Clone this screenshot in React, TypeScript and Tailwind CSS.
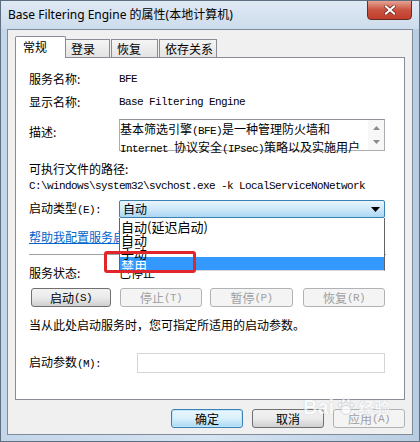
import React from "react";

const cjk = { fontFamily: '"Noto Sans CJK SC", "Noto Sans", sans-serif' };
const mono = { fontFamily: '"Liberation Mono", "Noto Sans CJK SC", monospace' };

// ASCII parts in the dialog are drawn with a narrow monospace face
const M = ({ children }: { children: React.ReactNode }) => (
  <span className="text-[11px] tracking-[-0.6px]" style={mono}>
    {children}
  </span>
);

const Btn = ({
  label,
  hot,
  w,
  disabled,
  focus,
  className = "",
}: {
  label: string;
  hot?: string;
  w: string;
  disabled?: boolean;
  focus?: boolean;
  className?: string;
}) => (
  <div
    className={`${w} h-[19px] flex items-center justify-center rounded-[3px] border text-[12px] leading-[16px] ${
      disabled
        ? "border-[#b0b3b6] bg-[#f4f4f4] text-[#a0a0a0]"
        : focus
        ? "border-[#3c7fb1] bg-gradient-to-b from-[#eaf6fd] via-[#d9f0fc] to-[#a7d9f5] text-black shadow-[inset_0_0_0_1px_#bfe6fb]"
        : "border-[#707070] bg-gradient-to-b from-[#f2f2f2] via-[#ebebeb] to-[#cfcfcf] text-black"
    } ${className}`}
    style={cjk}
  >
    {label}
    {hot && <M>({hot})</M>}
  </div>
);

const Tab = ({ label, w, active, className = "" }: { label: string; w: string; active?: boolean; className?: string }) => (
  <div
    className={`${w} flex items-center border border-[#898c95] border-b-0 text-[12px] leading-[16px] text-black ${
      active
        ? "h-[22px] bg-white pl-[7px] rounded-t-[2px] relative z-10 -mb-px pb-[2px]"
        : "h-[18px] bg-gradient-to-b from-[#f5f5f5] to-[#e3e3e3] pl-[5px]"
    } ${className}`}
    style={cjk}
  >
    {label}
  </div>
);

export default function App() {
  const items = ["自动(延迟启动)", "自动", "手动", "禁用"];
  return (
    <div className="relative w-[420px] h-[442px] overflow-hidden border border-[#5f6f82] bg-gradient-to-r from-[#c4d6ea] via-[#d7e4f1] to-[#b9cde2]">
      {/* title bar */}
      <div className="h-[28px] flex items-center pl-[7px] relative bg-gradient-to-b from-[#dfe9f4] to-[#cddcec]">
        <span className="text-[12px] leading-[16px] text-black" style={{ fontFamily: '"Noto Sans", "Noto Sans CJK SC", sans-serif' }}>
          Base Filtering Engine 的属性(本地计算机)
        </span>
        <div className="absolute right-[7px] top-[-1px] w-[45px] h-[20px] rounded-b-[4px] border border-[#6b2a22] bg-gradient-to-b from-[#e5a294] via-[#c9523f] to-[#c23d2b] flex items-center justify-center">
          <svg width="12" height="10" viewBox="0 0 12 10">
            <path d="M2 1.5 L10 8.5 M10 1.5 L2 8.5" stroke="#5a1a12" strokeWidth="3.4" strokeLinecap="square" />
            <path d="M2 1.5 L10 8.5 M10 1.5 L2 8.5" stroke="#ffffff" strokeWidth="2.2" strokeLinecap="square" />
          </svg>
        </div>
      </div>

      {/* dialog body */}
      <div className="mx-[6px] h-[406px] bg-[#f0f0f0] border border-[#7d8b9b] pt-[5px]">
        {/* tabs */}
        <div className="flex items-end h-[22px] pl-[7px]">
          <Tab label="常规" w="w-[51px]" active />
          <Tab label="登录" w="w-[45px]" className="-ml-px" />
          <Tab label="恢复" w="w-[47px]" className="ml-[1px]" />
          <Tab label="依存关系" w="w-[58px]" className="ml-[1px]" />
        </div>

        {/* tab panel */}
        <div className="ml-[7px] w-[390px] h-[343px] bg-white border border-[#898c95] pl-[13px] text-[12px] leading-[16px] text-black" style={cjk}>
          <div className="mt-[13px] h-[16px] flex items-center">
            <div className="w-[90px]">服务名称:</div>
            <M>BFE</M>
          </div>
          <div className="mt-[7px] h-[16px] flex items-center">
            <div className="w-[90px]">显示名称:</div>
            <M>Base Filtering Engine</M>
          </div>
          <div className="mt-[9px] h-[32px] flex items-start">
            <div className="w-[90px] mt-[5px]">描述:</div>
            <div className="w-[266px] h-[32px] border border-[#abadb3] border-t-[#8f9399] flex">
              <div className="flex-1 pt-[1px] leading-[15px] text-[12px]" style={cjk}>
                <div className="whitespace-nowrap">
                  基本筛选引擎<M>(BFE)</M>是一种管理防火墙和
                </div>
                <div className="whitespace-nowrap">
                  <M>Internet </M>协议安全<M>(IPsec)</M>策略以及实施用户
                </div>
              </div>
              <div className="w-[16px] bg-[#f7f7f7] flex flex-col items-center justify-center gap-[10px]">
                <svg width="7" height="4" viewBox="0 0 7 4">
                  <path d="M3.5 0 L7 4 L0 4 Z" fill="#8a8a8a" />
                </svg>
                <svg width="7" height="4" viewBox="0 0 7 4">
                  <path d="M0 0 L7 0 L3.5 4 Z" fill="#8a8a8a" />
                </svg>
              </div>
            </div>
          </div>
          <div className="mt-[10px] h-[16px] flex items-center">可执行文件的路径:</div>
          <div className="mt-[1px] h-[16px] flex items-center">
            <M>{"C:\\windows\\system32\\svchost.exe -k LocalServiceNoNetwork"}</M>
          </div>

          <div className="mt-[6px] h-[18px] flex items-center relative z-20">
            <div className="w-[90px]">
              启动类型<M>(E):</M>
            </div>
            <div className="relative w-[266px] h-[18px]">
              <div className="h-full rounded-[2px] border border-[#3c7fb1] bg-gradient-to-b from-[#e8f5fd] via-[#cfe8f9] to-[#aad6f3] flex items-center pl-[3px]">
                <span className="flex-1">自动</span>
                <svg width="9" height="5" viewBox="0 0 9 5" className="mr-[4px]">
                  <path d="M0 0 L9 0 L4.5 5 Z" fill="#000" />
                </svg>
              </div>
              {/* open drop-down list */}
              <div className="absolute left-0 top-full w-full bg-white border-x border-b border-[#646464] border-b-[#d6d6d6]">
                {items.map((t) => (
                  <div
                    key={t}
                    className={`h-[13px] leading-[13px] text-[13px] whitespace-nowrap pl-[1px] overflow-visible ${
                      t === "禁用" ? "bg-[#3399ff] text-white" : "text-black"
                    }`}
                    style={{ fontFamily: '"Noto Sans CJK SC", sans-serif' }}
                  >
                    <span className="relative top-[2px]">{t}</span>
                  </div>
                ))}
              </div>
            </div>
          </div>

          <div className="mt-[11px] h-[16px] flex items-center">
            <span className="text-[#0066cc] underline whitespace-nowrap">帮助我配置服务启动选项。</span>
          </div>
          <div className="mt-[9px] mr-[18px] h-[2px] border-t border-[#a0a0a0] border-b border-b-white" />

          <div className="mt-[9px] h-[16px] flex items-center">
            <div className="w-[90px]">服务状态:</div>
            <span>已停止</span>
          </div>

          <div className="mt-[7px] flex">
            <Btn label="启动" hot="S" w="w-[80px]" className="ml-[2px]" />
            <Btn label="停止" hot="T" w="w-[82px]" disabled className="ml-[9px]" />
            <Btn label="暂停" hot="P" w="w-[83px]" disabled className="ml-[8px]" />
            <Btn label="恢复" hot="R" w="w-[82px]" disabled className="ml-[10px]" />
          </div>

          <div className="mt-[10px] h-[16px] flex items-center">当从此处启动服务时，您可指定所适用的启动参数。</div>

          <div className="mt-[20px] h-[20px] flex items-center">
            <div className="w-[108px]">
              启动参数<M>(M):</M>
            </div>
            <div className="w-[248px] h-[20px] border border-[#d5d5d5] bg-white" />
          </div>
        </div>

        {/* dialog buttons */}
        <div className="mt-[9px] flex justify-end gap-[9px] pr-[7px]">
          <Btn label="确定" w="w-[72px]" focus />
          <Btn label="取消" w="w-[72px]" />
          <Btn label="应用" hot="A" w="w-[72px]" disabled />
        </div>
      </div>

      {/* annotation box */}
      <div className="absolute left-[103px] top-[250px] w-[92px] h-[22px] border-[3px] border-[#e0262a] rounded-[3px] z-30" />

      {/* watermark */}
      <div className="absolute left-[302px] top-[396px] z-30 flex items-end gap-[2px] opacity-70 pointer-events-none">
        <span className="text-[20px] font-bold text-white leading-[20px]" style={{ fontFamily: '"Liberation Sans", sans-serif', textShadow: "0 0 1px #9aa4b0" }}>
          Bai
        </span>
        <svg width="20" height="20" viewBox="0 0 20 20">
          <g fill="#ffffff" stroke="#a8b0ba" strokeWidth="0.6">
            <ellipse cx="10" cy="13" rx="5" ry="4.5" />
            <circle cx="4" cy="8" r="2" />
            <circle cx="16" cy="8" r="2" />
            <circle cx="7.5" cy="4" r="2" />
            <circle cx="12.5" cy="4" r="2" />
          </g>
        </svg>
        <span className="text-[16px] font-bold text-white leading-[20px]" style={{ ...cjk, textShadow: "0 0 1px #9aa4b0" }}>
          经验
        </span>
      </div>
    </div>
  );
}
